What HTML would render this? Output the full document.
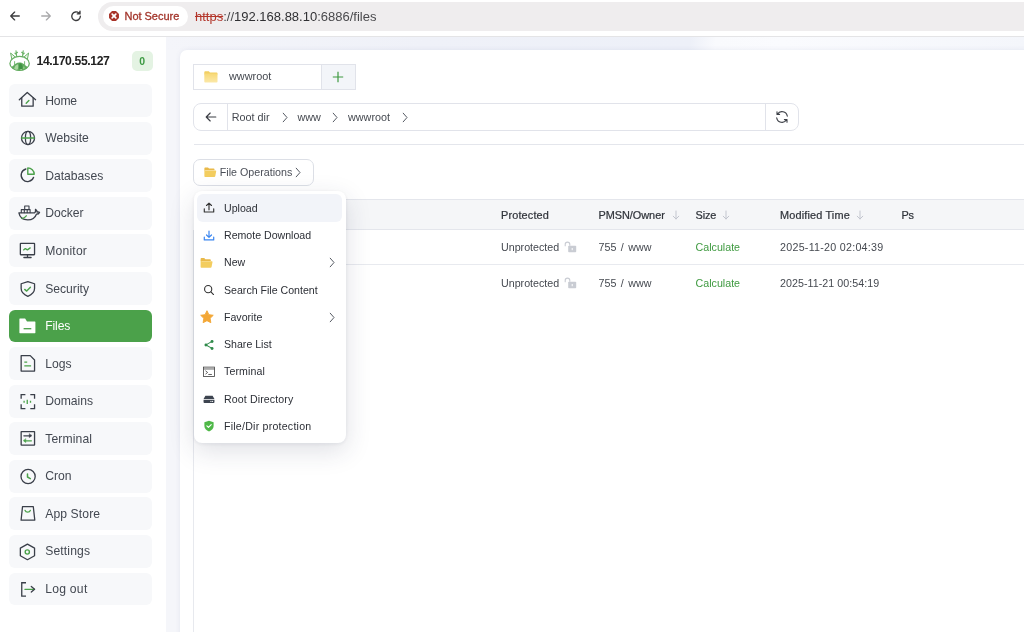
<!DOCTYPE html>
<html lang="en">
<head>
<meta charset="utf-8">
<title>Files</title>
<style>
*{box-sizing:border-box;margin:0;padding:0}
html,body{width:1024px;height:632px;overflow:hidden;background:#fff}
body{font-family:"Liberation Sans",sans-serif;color:#333;position:relative;-webkit-font-smoothing:antialiased}
.abs{position:absolute}
#chrome,#side,#content,#menuwrap{will-change:transform}
#menuwrap{position:absolute;left:0;top:0;width:1px;height:1px;z-index:10}
svg{display:block;overflow:visible}
/* browser toolbar */
#chrome{position:absolute;left:0;top:0;width:1024px;height:37px;background:#fff;border-bottom:1px solid #e4e4e6;z-index:20}
#addr{position:absolute;left:98px;top:2px;width:940px;height:29px;border-radius:15px;background:#efedee}
#pill{position:absolute;left:103px;top:6px;width:85px;height:21px;border-radius:11px;background:#fff}
#pill span{position:absolute;left:21.500px;top:3.500px;font-size:11px;line-height:13px;color:#a3352b;-webkit-text-stroke:.3px #a3352b;letter-spacing:-.03px;white-space:nowrap}
#url{position:absolute;left:195px;top:8.500px;font-size:13px;line-height:16px;color:#4a4a4d;white-space:nowrap}
#url .s{color:#b3362b;text-decoration:line-through}
#url .h{color:#303033}
/* sidebar */
#side{position:absolute;left:0;top:37px;width:166px;height:595px;background:#fff;z-index:5}
#main{position:absolute;left:166px;top:37px;width:858px;height:595px;background:#f5f6fa;overflow:hidden}
#band{position:absolute;left:0;top:0;width:100%;height:13px;background:linear-gradient(100deg,#f4f5fa 0%,#eff1f8 30%,#edf0f8 61%,#f9fafd 64%,#fafbfe 72%,#f4f6fb 100%)}
#ip{position:absolute;left:36.500px;top:17.300px;font-size:12.200px;line-height:14px;font-weight:bold;color:#222;white-space:nowrap;letter-spacing:-0.380px}
#badge{position:absolute;left:132px;top:13.800px;width:20.500px;height:20px;border-radius:5px;background:#e4f3e3;color:#3d9a43;font-size:10.500px;font-weight:bold;line-height:20px;text-align:center}
.mi{position:absolute;left:9.400px;width:143.100px;height:32.900px;border-radius:6px;background:#f7f8fa;font-size:12px;color:#434851}
.mi span{position:absolute;left:35.800px;top:9.600px;line-height:14px;white-space:nowrap;font-size:12.150px}
.mi svg{position:absolute;left:0;top:0;width:45px;height:32.600px}
.mi.on{background:#4ba14a;color:#fff}
/* card */
#card{position:absolute;left:179.5px;top:49.8px;width:860px;height:600px;background:#fff;border-radius:7px 0 0 0;box-shadow:0 0 5px rgba(90,100,150,.10)}
.t{position:absolute;white-space:nowrap;line-height:14px;font-size:10.700px;color:#454950}
.th{font-size:10.900px;color:#30343b;letter-spacing:.16px;margin-top:.5px;-webkit-text-stroke:.22px #30343b}
#menu{position:absolute;left:193.500px;top:191.300px;width:152.500px;height:251.700px;background:#fff;border-radius:8px;box-shadow:0 8px 26px rgba(40,50,80,.15),0 1px 4px rgba(40,50,80,.08);z-index:10}
.di{position:absolute;left:3.500px;width:145px;height:27.250px;border-radius:6px;font-size:10.600px;color:#2c2f36}
.di.hl{background:#f2f4f9}
.di span{position:absolute;left:27px;top:7.600px;line-height:13px;white-space:nowrap}
.di svg.i{position:absolute;left:5.700px;top:8px;width:12px;height:12px}
.di svg.c{position:absolute;left:131px;top:8.500px}
</style>
</head>
<body>
<div id="chrome">
  <svg class="abs" style="left:8.500px;top:10px" width="12" height="12" viewBox="0 0 14 14" fill="none" stroke="#3c3c3e" stroke-width="1.5" stroke-linecap="round" stroke-linejoin="round"><path d="M12 7H2.2M6.6 2.4 2 7l4.6 4.6"/></svg>
  <svg class="abs" style="left:39.500px;top:10px" width="12" height="12" viewBox="0 0 14 14" fill="none" stroke="#a9a9ab" stroke-width="1.5" stroke-linecap="round" stroke-linejoin="round"><path d="M2 7h9.8M7.4 2.4 12 7l-4.6 4.6"/></svg>
  <svg class="abs" style="left:69.800px;top:10px" width="12.500" height="12.500" viewBox="0 0 14 14" fill="none" stroke="#3c3c3e" stroke-width="1.5" stroke-linecap="round" stroke-linejoin="round"><path d="M11.6 7a4.8 4.8 0 1 1-1.5-3.5"/><path d="M11.2 1.4v3h-3" fill="#3c3c3e"/></svg>
  <div id="addr"></div>
  <div id="pill">
    <svg class="abs" style="left:6.300px;top:5px" width="10" height="10" viewBox="0 0 10 10"><path d="M3.300.8h3.400l2.500 2.500v3.400L6.700 9.200H3.300L.8 6.700V3.300z" fill="#a83329" stroke="#a83329" stroke-width="1.500" stroke-linejoin="round"/><path d="M3.200 3.200l3.600 3.600M6.800 3.200 3.200 6.800" stroke="#fff" stroke-width="1.700" stroke-linecap="round"/></svg>
    <span>Not Secure</span>
  </div>
  <div id="url"><span class="s">https</span>://<span class="h">192.168.88.10</span>:6886/files</div>
</div>

<div id="main"><div id="band"></div></div>

<div id="side">
  <svg class="abs" style="left:9px;top:12px" width="22" height="23" viewBox="0 0 22 23" fill="none">
    <ellipse cx="10.600" cy="14.400" rx="9.700" ry="7" stroke="#66ad62" stroke-width="1.250"/>
    <path d="M2.400 18.200c1.600-1 2.600-2.400 4.200-3.400 1.200-.8 2.400-1.300 3.800-1.300 1.600 0 2.800.5 4 1.300 1.600 1 2.600 2.400 4.400 3.400-1.800 2.300-4.800 3.500-8.200 3.500s-6.400-1.200-8.200-3.500z" fill="#62ab5f"/>
    <circle cx="7.200" cy="19.300" r="1.300" fill="#b9dfb0"/><circle cx="14.600" cy="18.800" r="1.200" fill="#8cc783"/><circle cx="12" cy="20.300" r="1" fill="#a9d79f"/>
    <path d="M5.200 19.800c.4-2.400 1.600-4 3.600-4.600.6 1.400.6 3.600-.4 5.600z" fill="#a9d79f"/>
    <path d="M10.800 14c2 .8 3.200 2.600 3 5.400-1.400.6-2.400.8-3.400.800-.6-2-.5-4.200.4-6.200z" fill="#3f9443"/>
    <path d="M5.600 16.200V12.600M15.600 16.200V12.600" stroke="#6cb368" stroke-width=".9" stroke-linecap="round"/>
    <path d="M1.600 4l1.200 6.200L6 7.800zM19.600 4l-1.200 6.200-3.200-2.400z" stroke="#6cb368" stroke-width="1" stroke-linejoin="round" fill="#eaf5e8"/>
    <path d="M7.700 7.600 7 1.800M7.200 4.400l1.300-1.100M7.100 5.200 6 4.200M13.500 7.600l.7-5.800M14 4.400l-1.300-1.100M14.100 5.200l1.100-1" stroke="#6cb368" stroke-width="1.150" stroke-linecap="round"/>
  </svg>
  <div id="ip">14.170.55.127</div>
  <div id="badge">0</div>
<!--MENU-->
  <div class="mi" style="top:47.2px"><svg viewBox="0 0 45 32.600" fill="none" stroke="#3a3f49" stroke-width="1.300" stroke-linejoin="round" stroke-linecap="round"><path d="M10.300 15.700 18.250 8.400l8.350 7.300"/><path d="M12.750 13.800v8.350h11.400V13.800"/><path d="M17.200 19.200l2.700-2.800" stroke="#4ba14a" stroke-width="1.400"/></svg><span style="letter-spacing:-0.15px">Home</span></div>
  <div class="mi" style="top:84.8px"><svg viewBox="0 0 45 32.600" fill="none" stroke="#3a3f49" stroke-width="1.300" stroke-linejoin="round" stroke-linecap="round"><circle cx="19" cy="16" r="6.550"/><ellipse cx="19" cy="16" rx="2.600" ry="6.550"/><path d="M12.600 16h12.800" stroke="#4ba14a" stroke-width="1.300"/></svg><span>Website</span></div>
  <div class="mi" style="top:122.3px"><svg viewBox="0 0 45 32.600" fill="none" stroke="#3a3f49" stroke-width="1.300" stroke-linejoin="round" stroke-linecap="round"><path d="M16.900 10a6.400 6.400 0 1 0 7.700 8.300"/><path d="M18.800 8.900v6.300h6.400a6.400 6.400 0 0 0-6.400-6.300z" stroke="#4ba14a" stroke-width="1.400"/></svg><span>Databases</span></div>
  <div class="mi" style="top:159.9px"><svg viewBox="0 0 45 32.600" fill="none" stroke="#3a3f49" stroke-width="1.300" stroke-linejoin="round" stroke-linecap="round"><path d="M9.900 15.900h15.700c.9-.9 1.200-2.200.9-3.600 1 .7 1.600 1.700 1.700 2.800.8-.2 1.600-.1 2.300.3-.6 1.300-1.700 1.900-3.100 1.800-1.300 3.800-4.200 5.700-8.600 5.700-4.900 0-8-2.400-8.900-7z"/><path d="M12.300 15.600v-3h8.800v3M15.300 12.600v3M18.200 12.600v3M15.700 12.400V9h4.300v3.400" stroke-width="1.100"/><path d="M12.900 21.400c1.800-.2 3.200-1.100 4.400-2.600" stroke="#4ba14a" stroke-width="1.300"/></svg><span>Docker</span></div>
  <div class="mi" style="top:197.4px"><svg viewBox="0 0 45 32.600" fill="none" stroke="#3a3f49" stroke-width="1.300" stroke-linejoin="round" stroke-linecap="round"><rect x="11.350" y="9.350" width="14.200" height="11.400" rx=".4"/><path d="M18.500 20.900v2.500M14.900 23.500h7.200"/><path d="M14.600 15.900l1.700-1.300 2.100 1.300 2.800-2" stroke="#4ba14a" stroke-width="1.300"/></svg><span style="letter-spacing:0.2px">Monitor</span></div>
  <div class="mi" style="top:235.0px"><svg viewBox="0 0 45 32.600" fill="none" stroke="#3a3f49" stroke-width="1.300" stroke-linejoin="round" stroke-linecap="round"><path d="M18.850 9.550l6.700 2.200v4.800c0 3.400-2.300 6-6.700 7.900-4.400-1.900-6.700-4.500-6.700-7.900v-4.800z"/><path d="M15.700 17.400l2 1.700 3.700-3.900" stroke="#4ba14a" stroke-width="1.400"/></svg><span>Security</span></div>
  <div class="mi on" style="top:272.6px"><svg viewBox="0 0 45 32.600"><path d="M10.400 9.100c0-.3.200-.5.500-.5h5.200l1.900 2.900h7.900c.3 0 .5.200.5.500v10.800c0 .3-.2.500-.5.500H10.900c-.3 0-.5-.2-.5-.5z" fill="#fff"/><path d="M14.600 18.700h7.700" stroke="#4ba14a" stroke-width="1.300"/></svg><span style="letter-spacing:-0.12px">Files</span></div>
  <div class="mi" style="top:310.1px"><svg viewBox="0 0 45 32.600" fill="none" stroke="#3a3f49" stroke-width="1.300" stroke-linejoin="round" stroke-linecap="round"><path d="M12.150 8.650h9.100l4.300 4.300v11.100H12.150z"/><path d="M15.300 15.200h2.900M15.300 18.800h6.800" stroke="#4ba14a" stroke-width="1.300" stroke-linecap="butt"/></svg><span>Logs</span></div>
  <div class="mi" style="top:347.7px"><svg viewBox="0 0 45 32.600" fill="none" stroke="#3a3f49" stroke-width="1.300" stroke-linejoin="round" stroke-linecap="round"><path d="M16.400 9.650h-4.250v4.200M21.300 9.650h4.250v4.200M16.400 23.550h-4.250v-4.200M21.300 23.550h4.250v-4.200" stroke-linecap="butt" stroke-linejoin="miter"/><path d="M15.100 15.800v2M18.250 14.700v4.200M21.500 15.800v2" stroke="#4ba14a" stroke-width="1.300" stroke-linecap="butt"/></svg><span>Domains</span></div>
  <div class="mi" style="top:385.2px"><svg viewBox="0 0 45 32.600" fill="none" stroke="#3a3f49" stroke-width="1.300" stroke-linejoin="round" stroke-linecap="round"><rect x="12.150" y="9.550" width="13.400" height="13.600" rx=".3"/><path d="M14.900 13.800h6.800"/><path d="M20.300 12v3.600l2.400-1.800z" fill="#3a3f49" stroke-width=".5"/><path d="M15.600 18.800h6.800" stroke="#4ba14a"/><path d="M16.800 17v3.600l-2.400-1.800z" fill="#4ba14a" stroke="#4ba14a" stroke-width=".5"/></svg><span style="letter-spacing:0.13px">Terminal</span></div>
  <div class="mi" style="top:422.8px"><svg viewBox="0 0 45 32.600" fill="none" stroke="#3a3f49" stroke-width="1.300" stroke-linejoin="round" stroke-linecap="round"><circle cx="19.100" cy="16.500" r="7.100"/><path d="M18.500 13.900v3.100l2.800 1.600" stroke="#4ba14a" stroke-width="1.500"/></svg><span>Cron</span></div>
  <div class="mi" style="top:460.4px"><svg viewBox="0 0 45 32.600" fill="none" stroke="#3a3f49" stroke-width="1.300" stroke-linejoin="round" stroke-linecap="round"><path d="M13.500 9.700h10.800l1.500 13.500H12.100z"/><path d="M16.100 13.500c.9 2.200 4.300 2.200 5.200 0" stroke="#4ba14a" stroke-width="1.400"/></svg><span style="letter-spacing:0.11px">App Store</span></div>
  <div class="mi" style="top:497.9px"><svg viewBox="0 0 45 32.600" fill="none" stroke="#3a3f49" stroke-width="1.300" stroke-linejoin="round" stroke-linecap="round"><path d="M18.450 9.100l7.100 4v7.600l-7.100 4-7.100-4v-7.600z"/><circle cx="18.300" cy="17" r="2.100" stroke="#4ba14a" stroke-width="1.400"/></svg><span style="letter-spacing:0.13px">Settings</span></div>
  <div class="mi" style="top:535.5px"><svg viewBox="0 0 45 32.600" fill="none" stroke="#3a3f49" stroke-width="1.300" stroke-linejoin="round" stroke-linecap="round"><path d="M17 9.750h-4.250v13.400H17" stroke-linecap="butt" stroke-linejoin="miter"/><path d="M15.900 16.300h9.400" stroke="#4ba14a" stroke-width="1.300"/><path d="M22.300 13.500l3.300 2.800-3.300 2.800"/></svg><span style="letter-spacing:0.26px">Log out</span></div>
<!--/MENU-->
</div>

<div id="card"></div>
<!--CONTENT-->
<div id="content">
  <!-- tab -->
  <div class="abs" style="left:193.200px;top:64px;width:162.800px;height:26px;border:1px solid #e1e3ea;background:#fff"></div>
  <div class="abs" style="left:321px;top:65px;width:34px;height:24px;background:#f3f5f9;border-left:1px solid #e1e3ea"></div>
  <svg class="abs" style="left:204px;top:70.500px" width="14" height="12" viewBox="0 0 14 12"><path d="M.3 1.200C.3.700.7.300 1.200.300h3.600l1.200 1.300h6.600c.5 0 .9.400.9.900v1H.3z" fill="#f2cf63"/><defs><linearGradient id="fg" x1="0" y1="0" x2="0" y2="1"><stop offset="0" stop-color="#f7d977"/><stop offset="1" stop-color="#fbe8a8"/></linearGradient></defs><rect x=".3" y="2.600" width="13.200" height="8.900" rx=".8" fill="url(#fg)"/></svg>
  <div class="t" style="left:229px;top:69px;font-size:10.900px">wwwroot</div>
  <svg class="abs" style="left:331.700px;top:70.500px" width="12" height="12" viewBox="0 0 12 12"><path d="M6 .8v10.400M.8 6h10.400" stroke="#3f9a40" stroke-width="1.200"/></svg>

  <!-- path bar -->
  <div class="abs" style="left:193.200px;top:103px;width:606.300px;height:27.700px;border:1px solid #e1e3ea;border-radius:8px;background:#fff"></div>
  <div class="abs" style="left:226.700px;top:104px;width:1px;height:25.700px;background:#e1e3ea"></div>
  <div class="abs" style="left:765px;top:104px;width:1px;height:25.700px;background:#e1e3ea"></div>
  <svg class="abs" style="left:204.500px;top:111px" width="12" height="12" viewBox="0 0 12 12" fill="none" stroke="#3b3e45" stroke-width="1.150" stroke-linecap="round" stroke-linejoin="round"><path d="M10.800 6H1.400M5.200 2 1.200 6l4 4"/></svg>
  <div class="t" style="left:231.800px;top:110px;font-size:10.800px">Root dir</div>
  <div class="t" style="left:297.500px;top:110px;font-size:10.800px">www</div>
  <div class="t" style="left:348px;top:110px;font-size:10.800px">wwwroot</div>
  <svg class="abs chev" style="left:281px;top:111.500px" width="8" height="11" viewBox="0 0 8 11" fill="none" stroke="#555a63" stroke-width="1" stroke-linecap="round" stroke-linejoin="round"><path d="M2.200 1.200 6 5.500 2.200 9.800"/></svg>
  <svg class="abs chev" style="left:331px;top:111.500px" width="8" height="11" viewBox="0 0 8 11" fill="none" stroke="#555a63" stroke-width="1" stroke-linecap="round" stroke-linejoin="round"><path d="M2.200 1.200 6 5.500 2.200 9.800"/></svg>
  <svg class="abs chev" style="left:400.500px;top:111.500px" width="8" height="11" viewBox="0 0 8 11" fill="none" stroke="#555a63" stroke-width="1" stroke-linecap="round" stroke-linejoin="round"><path d="M2.200 1.200 6 5.500 2.200 9.800"/></svg>
  <svg class="abs" style="left:775.200px;top:110px" width="14" height="14" viewBox="0 0 14 14" fill="none" stroke="#3b3e45" stroke-width="1.100" stroke-linecap="round" stroke-linejoin="round"><g transform="translate(14,0) scale(-1,1)"><path d="M1.700 6.200A5.400 5.400 0 0 1 11.600 4.200M12 1.800V4.400H9.400M12.300 7.800A5.400 5.400 0 0 1 2.400 9.800M2 12.200V9.600h2.600"/></g></svg>

  <!-- separator -->
  <div class="abs" style="left:193.500px;top:144px;width:840px;height:1px;background:#e4e6ec"></div>

  <!-- file ops button -->
  <div class="abs" style="left:193.200px;top:158.500px;width:120.800px;height:27px;border:1px solid #dcdfe6;border-radius:7px;background:#fff"></div>
  <svg class="abs" style="left:203.500px;top:166.800px" width="12.400" height="10.500" viewBox="0 0 13 11"><path d="M.4 1.200c0-.5.300-.8.800-.8h3l1.100 1.200h4.900c.5 0 .8.300.8.800v1H.4z" fill="#e9b949"/><path d="M1.700 3.600h10.400c.5 0 .8.400.7.900l-1 5.200c-.1.500-.5.800-1 .8H1.200c-.5 0-.8-.300-.8-.8V3z" fill="#f3cd5f"/></svg>
  <div class="t" style="left:219.800px;top:165px;font-size:10.700px;color:#4a4e57">File Operations</div>
  <svg class="abs chev" style="left:294px;top:167px" width="8" height="11" viewBox="0 0 8 11" fill="none" stroke="#555a63" stroke-width="1" stroke-linecap="round" stroke-linejoin="round"><path d="M2.200 1.200 6 5.500 2.200 9.800"/></svg>

  <!-- table -->
  <div class="abs" style="left:193.500px;top:199.300px;width:840px;height:30.500px;background:#f5f6f8;border-top:1px solid #e4e6ec;border-bottom:1px solid #e4e6ec"></div>
  <div class="abs" style="left:193.500px;top:264.400px;width:840px;height:1px;background:#e8eaef"></div>
  <div class="abs" style="left:193.200px;top:230px;width:1px;height:410px;background:#e7e9ee"></div>
  <!--TBL-->
  <div class="t th" style="left:501px;top:207.0px">Protected</div>
  <div class="t th" style="left:598.500px;top:207.0px;letter-spacing:-.03px">PMSN/Owner</div><svg class="abs" style="left:671.600px;top:209.500px" width="8" height="10" viewBox="0 0 8 10" fill="none" stroke="#c3c6cf" stroke-width="1" stroke-linecap="round" stroke-linejoin="round"><path d="M4 1v8M1.200 6.200 4 9l2.800-2.800"/></svg>
  <div class="t th" style="left:695.500px;top:207.0px;letter-spacing:-.1px">Size</div><svg class="abs" style="left:721.600px;top:209.500px" width="8" height="10" viewBox="0 0 8 10" fill="none" stroke="#c3c6cf" stroke-width="1" stroke-linecap="round" stroke-linejoin="round"><path d="M4 1v8M1.200 6.200 4 9l2.800-2.800"/></svg>
  <div class="t th" style="left:780px;top:207.0px">Modified Time</div><svg class="abs" style="left:855.700px;top:209.500px" width="8" height="10" viewBox="0 0 8 10" fill="none" stroke="#c3c6cf" stroke-width="1" stroke-linecap="round" stroke-linejoin="round"><path d="M4 1v8M1.200 6.200 4 9l2.800-2.800"/></svg>
  <div class="t th" style="left:901.500px;top:207.0px;letter-spacing:-.3px">Ps</div>
  <div class="t" style="left:501px;top:240.0px">Unprotected</div><svg class="abs" style="left:563.5px;top:240.5px" width="13" height="12" viewBox="0 0 13 12"><path d="M1.200 5.200V3.400a2.300 2.300 0 0 1 4.600 0v1.400" fill="none" stroke="#c9ccd3" stroke-width="1.100"/><rect x="4.200" y="4.800" width="8" height="6.400" rx=".8" fill="#c9ccd3"/><rect x="7.700" y="7" width="1" height="2.200" fill="#fff"/></svg>
  <div class="t" style="left:598.500px;top:240.0px;word-spacing:1.500px">755 / www</div>
  <div class="t" style="left:695.500px;top:240.0px;color:#3f9a40">Calculate</div>
  <div class="t" style="left:780px;top:240.0px;letter-spacing:.265px">2025-11-20 02:04:39</div>
  <div class="t" style="left:501px;top:276.3px">Unprotected</div><svg class="abs" style="left:563.5px;top:276.8px" width="13" height="12" viewBox="0 0 13 12"><path d="M1.200 5.200V3.400a2.300 2.300 0 0 1 4.600 0v1.400" fill="none" stroke="#c9ccd3" stroke-width="1.100"/><rect x="4.200" y="4.800" width="8" height="6.400" rx=".8" fill="#c9ccd3"/><rect x="7.700" y="7" width="1" height="2.200" fill="#fff"/></svg>
  <div class="t" style="left:598.500px;top:276.3px;word-spacing:1.500px">755 / www</div>
  <div class="t" style="left:695.500px;top:276.3px;color:#3f9a40">Calculate</div>
  <div class="t" style="left:780px;top:276.3px;letter-spacing:.040px">2025-11-21 00:54:19</div>
  <!--/TBL-->
</div>
<!--/CONTENT-->
<!--DD-->
<div id="menuwrap"><div id="menu">
  <div class="di hl" style="top:3.00px"><svg class="i" width="13" height="13" viewBox="0 0 13 13"><g fill="none" stroke="#333" stroke-width="1.250" stroke-linecap="round" stroke-linejoin="round"><path d="M6.500 8.500V1.400M3.800 3.800 6.500 1.200l2.700 2.600M1.400 7.400v3.400h10.200V7.400"/></g></svg><span>Upload</span></div>
  <div class="di" style="top:30.25px"><svg class="i" width="13" height="13" viewBox="0 0 13 13"><g fill="none" stroke="#3b86f0" stroke-width="1.300" stroke-linecap="round" stroke-linejoin="round"><path d="M6.500 1.200v6.600M3.800 5.400 6.500 8l2.700-2.600M1.400 7.600v3.200h10.200V7.600"/></g></svg><span>Remote Download</span></div>
  <div class="di" style="top:57.50px"><svg class="i" width="13" height="13" viewBox="0 0 13 13"><g transform="translate(-3,.8) scale(1.040)"><path d="M.4 1.200c0-.5.300-.8.800-.8h3l1.100 1.200h4.900c.5 0 .8.300.8.800v1H.4z" fill="#e9b949"/><path d="M1.700 3.600h10.400c.5 0 .8.400.7.900l-1 5.200c-.1.500-.5.800-1 .8H1.200c-.5 0-.8-.300-.8-.8V3z" fill="#f3cd5f"/></g></svg><span>New</span><svg class="c" width="8" height="11" viewBox="0 0 8 11" fill="none" stroke="#555a63" stroke-width="1" stroke-linecap="round" stroke-linejoin="round"><path d="M2.200 1.200 6 5.500 2.200 9.800"/></svg></div>
  <div class="di" style="top:84.75px"><svg class="i" width="13" height="13" viewBox="0 0 13 13"><g fill="none" stroke="#333" stroke-width="1.200" stroke-linecap="round"><circle cx="5.600" cy="5.600" r="3.900"/><path d="M8.600 8.600 11.400 11.400"/></g></svg><span>Search File Content</span></div>
  <div class="di" style="top:112.00px"><svg class="i" width="13" height="13" viewBox="0 0 13 13"><path transform="translate(-3.400,-1.300) scale(1.100)" d="M7 .9l1.900 3.900 4.300.6-3.100 3 .7 4.300L7 10.700l-3.800 2 .7-4.300-3.100-3 4.300-.6z" fill="#f3a736" stroke="#f3a736" stroke-width=".9" stroke-linejoin="round"/></svg><span>Favorite</span><svg class="c" width="8" height="11" viewBox="0 0 8 11" fill="none" stroke="#555a63" stroke-width="1" stroke-linecap="round" stroke-linejoin="round"><path d="M2.200 1.200 6 5.500 2.200 9.800"/></svg></div>
  <div class="di" style="top:139.25px"><svg class="i" width="13" height="13" viewBox="0 0 13 13"><g fill="#2f8a4a" stroke="#2f8a4a"><path d="M9.800 2.600 3.200 6.400l6.600 3.800" fill="none" stroke-width="1.100"/><circle cx="9.800" cy="2.600" r="1.600" stroke="none"/><circle cx="3.200" cy="6.400" r="1.600" stroke="none"/><circle cx="9.800" cy="10.200" r="1.600" stroke="none"/></g></svg><span>Share List</span></div>
  <div class="di" style="top:166.50px"><svg class="i" width="13" height="13" viewBox="0 0 13 13"><g fill="none" stroke="#444" stroke-width=".9"><rect x=".6" y="1.200" width="11.800" height="10.200"/><path d="M.6 3.200h11.800"/><path d="M3 5.400l2 1.600-2 1.600M6.200 9.200h3" stroke-linecap="round" stroke-linejoin="round"/></g></svg><span style="letter-spacing:.1px">Terminal</span></div>
  <div class="di" style="top:193.75px"><svg class="i" width="13" height="13" viewBox="0 0 13 13"><path d="M2.600 3h7.800l2 3.600H.6zM.6 7.200h11.800V10c0 .5-.4.900-.9.900h-10c-.5 0-.9-.4-.9-.9z" fill="#3d4450"/><circle cx="10.400" cy="9.100" r=".6" fill="#fff"/><circle cx="8.600" cy="9.100" r=".6" fill="#fff"/></svg><span style="letter-spacing:.12px">Root Directory</span></div>
  <div class="di" style="top:221.00px"><svg class="i" width="13" height="13" viewBox="0 0 13 13"><path d="M6.500.8l5 1.700v4.100c0 2.700-2 4.600-5 5.800-3-1.200-5-3.100-5-5.800V2.500z" fill="#4fb848"/><path d="M4.200 6.400l1.700 1.700 3-3.100" fill="none" stroke="#fff" stroke-width="1.200" stroke-linecap="round" stroke-linejoin="round"/></svg><span style="letter-spacing:.23px">File/Dir protection</span></div>
</div></div>
<!--/DD-->
</body>
</html>
